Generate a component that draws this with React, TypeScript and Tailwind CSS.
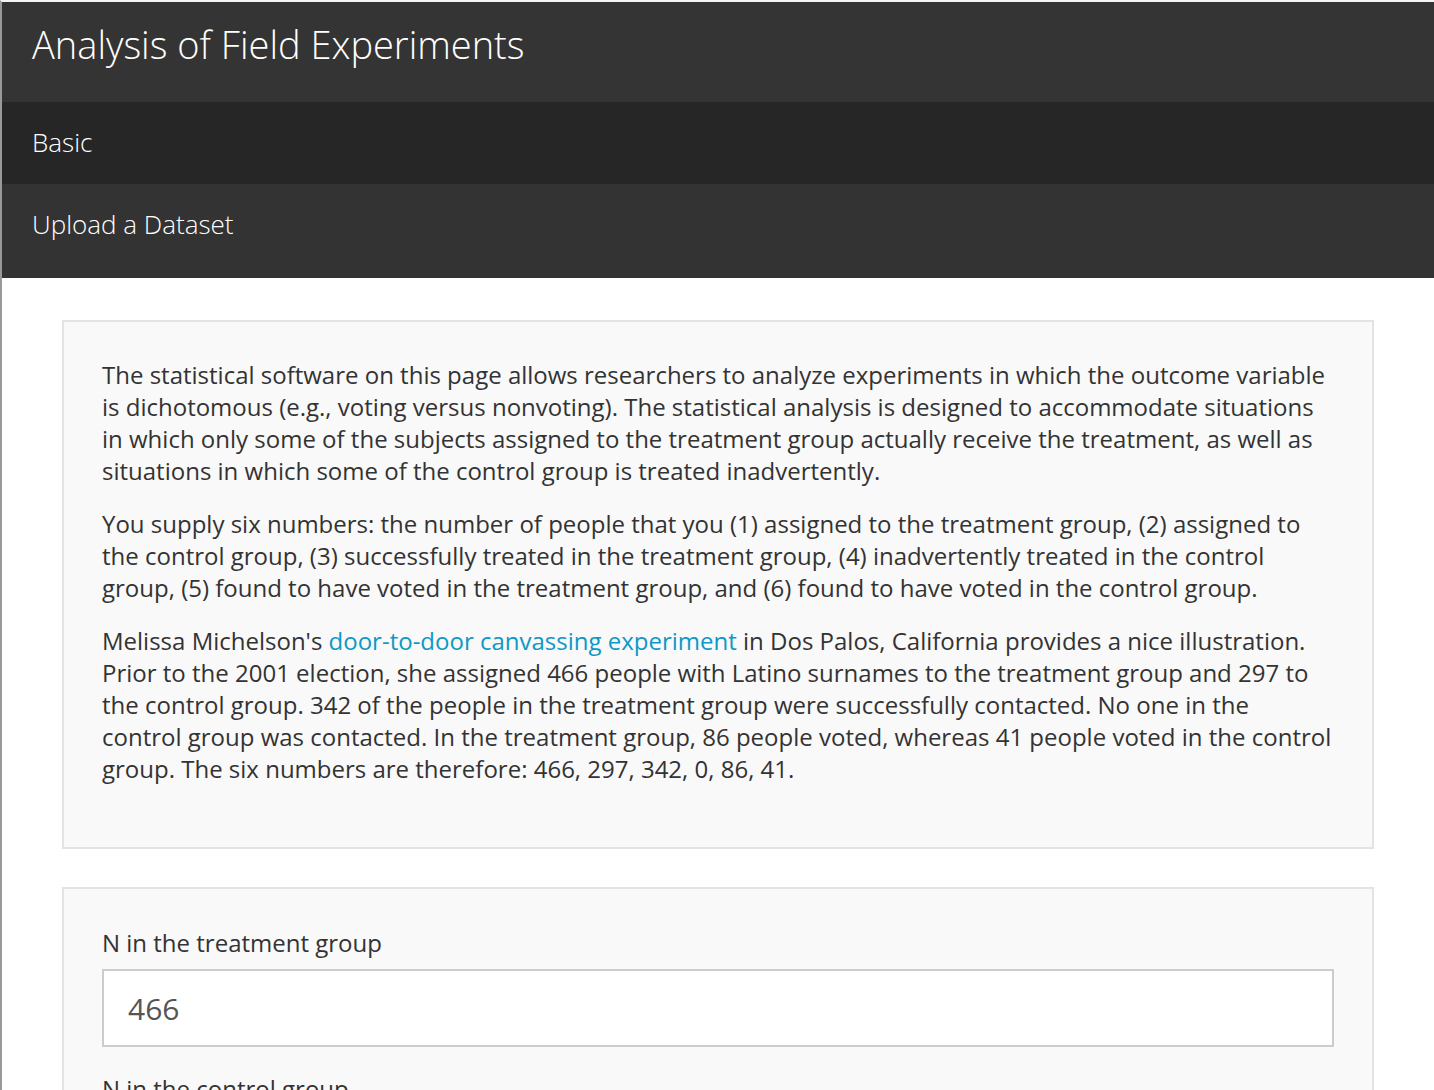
export default function App() {
  const font = { fontFamily: '"Open Sans", "Liberation Sans", sans-serif' }

  return (
    <div
      style={font}
      className="min-h-[1090px] border-l-2 border-t-2 border-l-[#999999] border-t-[#f4f4f4] bg-white text-[#333333]"
    >
      {/* Title bar */}
      <div className="flex h-[100px] items-center bg-[#343434] px-[30px] pb-[16px]">
        <h1 className="text-[38px] font-light leading-none text-white">
          Analysis of Field Experiments
        </h1>
      </div>

      {/* Nav list */}
      <div className="bg-[#333333] pb-[12px]">
        <div className="flex h-[82px] items-center bg-[#262626] px-[30px] pb-[2px] text-[26px] font-light text-white">
          Basic
        </div>
        <div className="flex h-[82px] items-center px-[30px] pb-[2px] text-[26px] font-light text-white">
          Upload a Dataset
        </div>
      </div>

      <div className="px-[60px] pt-[42px]">
        {/* Intro well */}
        <div className="border-2 border-[#e3e3e3] bg-[#f9f9f9] px-[38px] pt-[37px] pb-[41px] text-[24px] leading-[32px]">
          <p className="mb-[21px]">
            The statistical software on this page allows researchers to analyze experiments in which the
            outcome variable is dichotomous (e.g., voting versus nonvoting). The statistical analysis is
            designed to accommodate situations in which only some of the subjects assigned to the treatment
            group actually receive the treatment, as well as situations in which some of the control group
            is treated inadvertently.
          </p>
          <p className="mb-[21px]">
            You supply six numbers: the number of people that you (1) assigned to the treatment group, (2)
            assigned to the control group, (3) successfully treated in the treatment group, (4) inadvertently
            treated in the control group, (5) found to have voted in the treatment group, and (6) found to
            have voted in the control group.
          </p>
          <p className="mb-[21px]">
            Melissa Michelson's{' '}
            <a href="#" className="text-[#0e98c5]">
              door-to-door canvassing experiment
            </a>{' '}
            in Dos Palos, California provides a nice illustration. Prior to the 2001 election, she assigned
            466 people with Latino surnames to the treatment group and 297 to the control group. 342 of the
            people in the treatment group were successfully contacted. No one in the control group was
            contacted. In the treatment group, 86 people voted, whereas 41 people voted in the control group.
            The six numbers are therefore: 466, 297, 342, 0, 86, 41.
          </p>
        </div>

        {/* Inputs well */}
        <div className="mt-[38px] border-2 border-[#e3e3e3] bg-[#f9f9f9] px-[38px] pt-[38px] pb-[30px] text-[24px] leading-[32px]">
          <div className="mb-[26px]">
            <label className="mb-[10px] block">N in the treatment group</label>
            <input
              defaultValue="466"
              style={font}
              className="block h-[78px] w-full border-2 border-[#cccccc] bg-white px-[24px] text-[30px] text-[#555555] outline-none"
            />
          </div>
          <div className="mb-[26px]">
            <label className="mb-[10px] block">N in the control group</label>
            <input
              defaultValue="297"
              style={font}
              className="block h-[78px] w-full border-2 border-[#cccccc] bg-white px-[24px] text-[30px] text-[#555555] outline-none"
            />
          </div>
        </div>
      </div>
    </div>
  )
}
